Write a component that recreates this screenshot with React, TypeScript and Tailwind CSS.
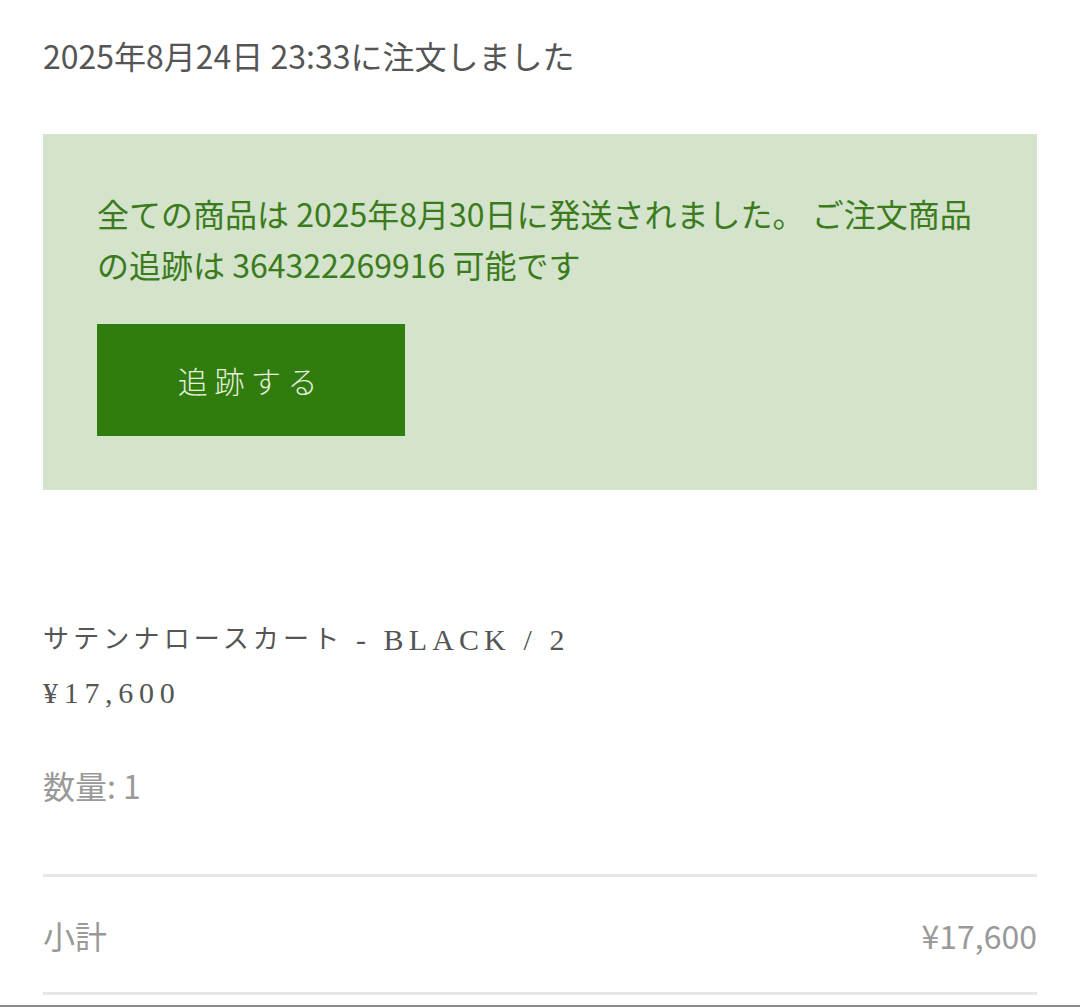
const sans = 'font-["Noto_Sans_CJK_JP","Noto_Sans",sans-serif]';

export default function App() {
  return (
    <div className={`min-h-[1007px] bg-white ${sans}`}>
      <div className="px-[43px]">
        <p className="pt-[35px] text-[32px] leading-[40px] text-[#555]">2025年8月24日 23:33に注文しました</p>

        <div className="mt-[59px] bg-[#d4e3cb] p-[54px]">
          <p className="text-[32px] leading-[51px] text-[#3b7b1c]">
            全ての商品は 2025年8月30日に発送されました。 ご注文商品の追跡は 364322269916 可能です
          </p>
          <button className="mt-[34px] flex h-[112px] w-[308px] items-center justify-center bg-[#317c0f] text-[30px] font-light tracking-[0.22em] text-[#e6f0dd]">
            追跡する
          </button>
        </div>

        <div className='mt-[130px] font-["Liberation_Serif","Noto_Sans_CJK_JP",serif] text-[#555]'>
          <p className="flex h-[40px] items-center whitespace-pre text-[26px] leading-[40px] tracking-[0.16em]">
            サテンナロースカート<span className="text-[30px] leading-[40px] tracking-[0.17em]"> - BLACK / 2</span>
          </p>
          <p className="mt-[13px] h-[40px] text-[30px] leading-[40px] tracking-[0.19em]">¥17,600</p>
        </div>

        <p className="mt-[52px] text-[32px] leading-[40px] text-[#999]">数量: 1</p>

        <div className="mt-[69px] h-[3px] bg-[#e6e6e6]" />
        <div className="flex h-[115px] items-center justify-between text-[32px] text-[#999]">
          <span>小計</span>
          <span>¥17,600</span>
        </div>
        <div className="h-[3px] bg-[#e6e6e6]" />
      </div>
      <div className="mt-[10px] h-[3px] bg-[#8a8a8a]" />
    </div>
  );
}
